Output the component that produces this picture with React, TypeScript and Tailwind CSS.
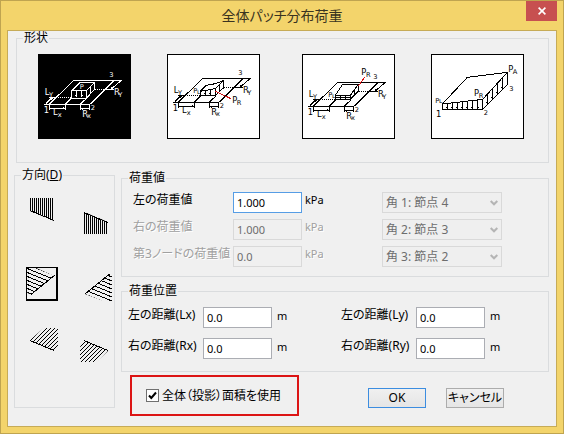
import { useState } from "react";
import type { ReactNode } from "react";

const FONT = "font-['Noto_Sans','Noto_Sans_CJK_JP',sans-serif] [font-feature-settings:'palt']";

function Group({ title, className = "", children }: { title: ReactNode; className?: string; children: ReactNode }) {
  return (
    <fieldset className={`min-w-0 border border-[#dadcde] px-1.5 ${className}`}>
      <legend className="px-px text-xs leading-[14px]">{title}</legend>
      {children}
    </fieldset>
  );
}

/* ---------- shape pictures (three drawing units per pixel) ---------- */

function Label({ x, y, t, small = false }: { x: number; y: number; t: string; small?: boolean }) {
  return (
    <text x={x} y={y} fontSize={small ? 20 : 25} fill="currentColor" stroke="none" fontFamily="DejaVu Sans, sans-serif">
      {t}
    </text>
  );
}

function Plate() {
  return (
    <>
      <path d="M40 169H178M130 96H272M55 168L130 96M178 168L250 96M103 168L122 150M148 168L168 150M45 166L62 149M54 148H76M272 96L240 124M226 124H250" />
      <path d="M76 148H122M192 124H226" strokeDasharray="3 3" />
      <path d="M56 170V187M103 170V187M56 181H103M148 170V187M175 170V187M148 182H175" />
      <path d="M58 151L64 149L62 156M240 118V124H248M97 178V184M154 179V185" />
      <Label x={38} y={194} t="1" />
      <Label x={179} y={187} t="2" small />
      <Label x={235} y={87} t="3" small />
      <Label x={41} y={140} t="L" />
      <Label x={54} y={146} t="Y" small />
      <Label x={249} y={141} t="R" />
      <Label x={262} y={148} t="Y" small />
      <Label x={66} y={201} t="L" />
      <Label x={80} y={207} t="x" small />
      <Label x={154} y={206} t="R" />
      <Label x={168} y={211} t="x" small />
    </>
  );
}

function UniformPatch() {
  return (
    <>
      <Plate />
      <path d="M122 128H167V150H122ZM122 128L148 103H190L167 128M190 103V124L167 150M136 128V148M152 128V148M179 116V136M133 143H139M149 143H155M176 132H182" />
      <Label x={146} y={123} t="P" small />
    </>
  );
}

function RightPatch() {
  return (
    <>
      <g transform="translate(-3 -6)">
        <Plate />
      </g>
      <path d="M118 142V130L163 122V142M118 142H163M118 130L136 112L163 107L187 98V120L163 142M163 122L187 98M133 128V142M148 125V142M176 110V130M130 137H136M145 137H151M173 126H179" />
      <path d="M163 130L210 152" stroke="#d01818" />
      <Label x={97} y={136} t="P" small />
      <Label x={108} y={138} t="ʟ" small />
      <Label x={214} y={165} t="P" />
      <Label x={227} y={171} t="R" small />
    </>
  );
}

function FarPatch() {
  return (
    <>
      <g transform="translate(-3 6)">
        <Plate />
      </g>
      <path d="M118 142H163V154H118ZM118 142L140 109H187L163 142M187 109V130L163 154M133 142V154M148 142V154M176 124V142M118 149H163M173 138H179" />
      <path d="M187 114L206 88" stroke="#e01010" />
      <Label x={97} y={148} t="P" small />
      <Label x={108} y={150} t="ʟ" small />
      <Label x={196} y={82} t="P" />
      <Label x={210} y={88} t="R" small />
    </>
  );
}

function FullPatch() {
  const front = [67, 82, 97, 112, 127, 142, 158];
  const side = [187, 202, 217, 232];
  return (
    <>
      <path d="M52 184V168L127 88L247 73V110L173 184H52M52 168L173 154V184M173 154L247 73" />
      {front.map((x) => (
        <path key={x} d={`M${x} ${Math.round(168 - (x - 52) * 0.116)}V184M${x - 3} 178H${x + 3}`} />
      ))}
      {side.map((x) => (
        <path key={x} d={`M${x} ${Math.round(154 - (x - 173) * 1.095)}V${357 - x}M${x - 3} ${350 - x}H${x + 3}`} />
      ))}
      <Label x={31} y={164} t="P" small />
      <Label x={42} y={166} t="ʟ" small />
      <Label x={33} y={206} t="1" />
      <Label x={176} y={201} t="2" small />
      <Label x={253} y={130} t="3" small />
      <Label x={147} y={145} t="P" />
      <Label x={161} y={151} t="R" small />
      <Label x={250} y={73} t="P" />
      <Label x={263} y={79} t="A" small />
    </>
  );
}

const SHAPES = [
  { name: "等分布", view: "21 18 279 255", art: <UniformPatch /> },
  { name: "右端", view: "18 18 279 255", art: <RightPatch /> },
  { name: "奥端", view: "18 18 279 255", art: <FarPatch /> },
  { name: "全面", view: "18 18 279 255", art: <FullPatch /> },
];

function ShapeButton({ index, selected, onSelect }: { index: number; selected: boolean; onSelect: (i: number) => void }) {
  const shape = SHAPES[index];
  return (
    <button
      type="button"
      aria-label={shape.name}
      aria-pressed={selected}
      onClick={() => onSelect(index)}
      className={`h-[85px] w-[93px] outline -outline-offset-1 outline-black ${selected ? "bg-black text-white" : "bg-white text-black"}`}
    >
      <svg viewBox={shape.view} className="block size-full" fill="none" stroke="currentColor" strokeWidth="3" shapeRendering="crispEdges">
        {shape.art}
      </svg>
    </button>
  );
}

/* ---------- direction pictures ---------- */

const STEPS = Array.from({ length: 12 }, (_, i) => i);

const DIRECTIONS = [
  {
    name: "下向き",
    clip: "4,-4 28,-4 28,19 4,9",
    edge: "M4 8.5L28 18.5",
    hatch: STEPS.map((i) => `M${4.5 + i * 2} -4V20`).join(""),
  },
  {
    name: "上向き",
    clip: "4,10 28,20 28,32 4,32",
    edge: "M4 10.5L28 20.5",
    hatch: STEPS.map((i) => `M${4.5 + i * 2} 8V32`).join(""),
  },
  {
    name: "左斜め下",
    clip: "0,0 8,0 28,9 5,28 0,25",
    edge: "M29 8L5 27.5",
    hatch: STEPS.map((i) => `M0 ${i * 4 - 11}l32 13`).join(""),
  },
  {
    name: "右斜め下",
    clip: "29,7 32,9 32,34 24,34 5,27",
    edge: "M29.5 7L5 27",
    hatch: STEPS.map((i) => `M0 ${i * 4 - 7}l32 13`).join(""),
  },
  {
    name: "右斜め上",
    clip: "4,8 18,-4 32,-4 32,15 28,19",
    edge: "M4 8.5L28 18.5",
    hatch: STEPS.map((i) => `M${i * 3} ${9 + i}l24 -24`).join(""),
  },
  {
    name: "左斜め上",
    clip: "4,8 28,19 16,30 0,30 0,15",
    edge: "M4 8.5L28 18.5",
    hatch: STEPS.map((i) => `M${i * 3} ${7 + i}l-24 24`).join(""),
  },
];

function DirectionButton({ index, selected, onSelect }: { index: number; selected: boolean; onSelect: (i: number) => void }) {
  const d = DIRECTIONS[index];
  return (
    <button type="button" aria-label={d.name} aria-pressed={selected} onClick={() => onSelect(index)} className="h-[34px] w-8">
      <svg viewBox="0 0 32 34" className="block size-full overflow-visible" fill="none" stroke="black" shapeRendering="crispEdges">
        <clipPath id={`direction-${index}`}>
          <polygon points={d.clip} />
        </clipPath>
        <path d={d.hatch} clipPath={`url(#direction-${index})`} />
        <path d={d.edge} />
        {selected && (
          <>
            <path d="M0 .5H32M.5 0V34" />
            <path d="M31 0V34M0 33H32" strokeWidth="2" />
          </>
        )}
      </svg>
    </button>
  );
}

/* ---------- fields ---------- */

const FIELD = "h-[21px] w-[69px] shrink-0 rounded-none border px-[3px] text-[11px] outline-none";
const DIMMED = "text-[#a0a0a0] [text-shadow:1px_1px_0_#fff]";

function LoadRow({ id, label, value, corner, active = false }: { id: string; label: string; value: string; corner: string; active?: boolean }) {
  const tone = active ? "text-black" : DIMMED;
  return (
    <div className="flex items-start">
      <label htmlFor={id} className={`w-[100px] shrink-0 leading-[15px] ${tone}`}>
        {label}
      </label>
      <input
        id={id}
        defaultValue={value}
        disabled={!active}
        className={`${FIELD} ${active ? "border-[#569de5] bg-white text-black" : "border-[#d9d9d9] bg-[#f0f0f0] text-[#6d6d6d]"}`}
      />
      <span className={`ml-[3px] text-[11px] leading-[15px] ${tone}`}>kPa</span>
      <div className="relative mr-10 ml-auto w-[120px]">
        <select
          disabled
          aria-label={corner.slice(0, 3)}
          className="block h-[21px] w-full appearance-none rounded-none border border-[#d9d9d9] bg-[#efefef] px-[3px] text-xs leading-[19px] text-[#6d6d6d] opacity-100"
        >
          <option>{corner}</option>
        </select>
        <svg viewBox="0 0 8 6" className="pointer-events-none absolute top-2 right-1 h-1.5 w-2" fill="none" stroke="#b4b4b4" strokeWidth="2">
          <path d="M.7 1L4 4.3L7.3 1" />
        </svg>
      </div>
    </div>
  );
}

function DistanceRow({ id, label }: { id: string; label: string }) {
  return (
    <div className="flex items-start">
      <label htmlFor={id} className="w-[75px] shrink-0 leading-[15px]">
        {label}
      </label>
      <input id={id} defaultValue="0.0" className={`${FIELD} border-[#abadb3] bg-white`} />
      <span className="ml-[5px] text-[11px] leading-[17px]">m</span>
    </div>
  );
}

export default function App() {
  const [shape, setShape] = useState(0);
  const [direction, setDirection] = useState(2);
  const [projected, setProjected] = useState(true);

  return (
    <main className={`flex min-h-screen w-full flex-col border border-[#bfa450] bg-[#f3d46b] px-1.5 pb-1.5 text-xs text-black ${FONT}`}>
      <header className="grid h-[29px] grid-cols-[1fr_auto_1fr] items-start">
        <h1 className="col-start-2 text-sm leading-[29px] text-[#3a3320]">全体パッチ分布荷重</h1>
        <button type="button" aria-label="閉じる" className="flex h-5 w-[31px] items-center justify-center justify-self-end bg-[#c75050]">
          <svg viewBox="0 0 8 8" className="size-2" stroke="white" strokeWidth="1.6">
            <path d="M.6 .6L7.4 7.4M7.4 .6L.6 7.4" />
          </svg>
        </button>
      </header>

      <form className="flex-1 border border-[#c6ab57] bg-[#f0f0f0] pr-[7px] pl-1.5" onSubmit={(e) => e.preventDefault()}>
        <Group title="形状" className="ml-0.5 pt-[9px] pb-[23px]">
          <div className="flex justify-center gap-[42px] pr-1">
            <div className="flex gap-9">
              <ShapeButton index={0} selected={shape === 0} onSelect={setShape} />
              <ShapeButton index={1} selected={shape === 1} onSelect={setShape} />
            </div>
            <div className="flex gap-9">
              <ShapeButton index={2} selected={shape === 2} onSelect={setShape} />
              <ShapeButton index={3} selected={shape === 3} onSelect={setShape} />
            </div>
          </div>
        </Group>

        <div className="mt-[5px] flex items-start gap-1.5">
          <Group
            title={
              <>
                方向(<u>D</u>)
              </>
            }
            className="w-[101px] shrink-0 pt-5 pb-[41px]"
          >
            <div className="grid grid-cols-[32px_32px] gap-x-[22px] gap-y-[31px] pl-[5px]">
              {DIRECTIONS.map((d, i) => (
                <DirectionButton key={d.name} index={i} selected={direction === i} onSelect={setDirection} />
              ))}
            </div>
          </Group>

          <div className="min-w-0 flex-1 pt-[3px]">
            <Group title="荷重値" className="pt-[7px] pb-[9px]">
              <div className="flex flex-col gap-1.5 pl-[5px]">
                <LoadRow id="load-left" label="左の荷重値" value="1.000" corner="角 1: 節点 4" active />
                <LoadRow id="load-right" label="右の荷重値" value="1.000" corner="角 2: 節点 3" />
                <LoadRow id="load-third" label="第3ノードの荷重値" value="0.0" corner="角 3: 節点 2" />
              </div>
            </Group>

            <Group title="荷重位置" className="mt-[7px] pt-[9px] pb-3">
              <div className="grid grid-cols-2">
                <div className="flex flex-col gap-2.5">
                  <DistanceRow id="lx" label="左の距離(Lx)" />
                  <DistanceRow id="rx" label="右の距離(Rx)" />
                </div>
                <div className="flex flex-col gap-2.5 pl-1.5">
                  <DistanceRow id="ly" label="左の距離(Ly)" />
                  <DistanceRow id="ry" label="右の距離(Ry)" />
                </div>
              </div>
            </Group>

            <div className="mt-[3px] flex items-center pr-[45px] pl-[9px]">
              <label className="flex h-[41px] w-[169px] shrink-0 items-center gap-[3px] border-2 border-[#dc1414] pl-3.5">
                <span className="grid size-[13px]">
                  <input
                    type="checkbox"
                    checked={projected}
                    onChange={(e) => setProjected(e.target.checked)}
                    className="col-start-1 row-start-1 size-[13px] appearance-none border border-[#707070] bg-white"
                  />
                  {projected && (
                    <svg viewBox="0 0 13 13" className="pointer-events-none col-start-1 row-start-1" fill="none" stroke="black" strokeWidth="2">
                      <path d="M3 6.5L5.3 9L10 3.5" />
                    </svg>
                  )}
                </span>
                <span>全体（投影）面積を使用</span>
              </label>
              <div className="ml-auto flex items-center gap-5 pt-1">
                <button type="submit" className="h-5 w-[58px] border border-[#3c8de0] bg-linear-to-b from-[#f0f0f0] to-[#e5e5e5] leading-[17px]">
                  OK
                </button>
                <button type="button" className="h-5 w-[58px] border border-[#acacac] bg-linear-to-b from-[#f0f0f0] to-[#e5e5e5] leading-[17px] whitespace-nowrap">
                  キャンセル
                </button>
              </div>
            </div>
          </div>
        </div>
      </form>
    </main>
  );
}
